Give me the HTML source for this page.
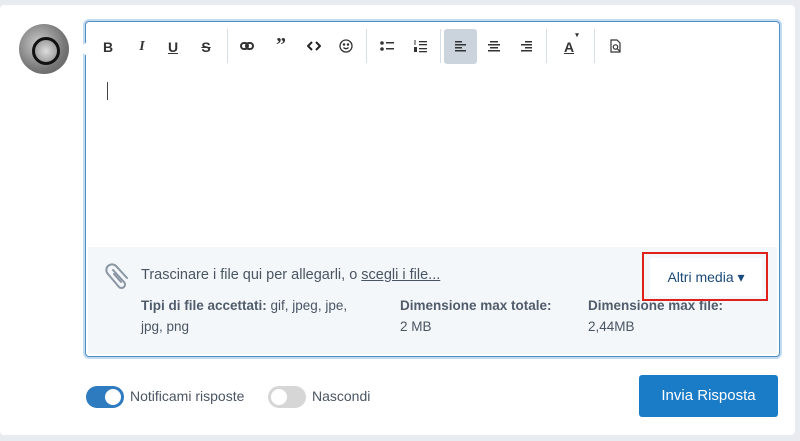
<!DOCTYPE html>
<html><head><style>
*{margin:0;padding:0;box-sizing:border-box}
body{width:800px;height:441px;background:#e8ecf0;font-family:"Liberation Sans",sans-serif;position:relative;overflow:hidden}
.card{position:absolute;left:0;top:5px;width:795px;height:430px;background:#fff;border-radius:4px}
.av{position:absolute;left:19px;top:24px;width:50px;height:50px;border-radius:50%;background:radial-gradient(circle at 40% 40%,#ccc,#777 60%,#555);}
.av:after{content:"";position:absolute;left:13px;top:13px;width:22px;height:22px;border-radius:50%;border:3px solid #111;background:radial-gradient(circle,#ddd,#888)}
.ed{position:absolute;left:85px;top:21px;width:695px;height:336px;border:1px solid #4f8fc8;box-shadow:0 0 0 2px #c4dbef;border-radius:4px;background:#fff}
.tip{position:absolute;left:77px;top:42px;width:10px;height:14px;background:#fff;clip-path:polygon(100% 0,0 50%,100% 100%)}
.ic{position:absolute;top:17px;font-size:14px;color:#333;font-weight:bold;transform:translateX(-50%)}
svg.s{position:absolute;top:17px;width:14px;height:14px}
.sep{position:absolute;top:7px;width:1px;height:34px;background:#d8dee5}
.cur{position:absolute;left:21px;top:60px;width:1px;height:18px;background:#444}
.att{position:absolute;left:2px;top:225px;width:689px;height:107px;background:#f4f7fa}
.t{position:absolute;font-size:14px;color:#4a5563}
.b{font-weight:bold;color:#505c6b}
.red{position:absolute;left:642px;top:252px;width:126px;height:49px;border:2px solid #e0201b}
.btnm{position:absolute;left:650px;top:258px;width:112px;height:38px;background:#fff;border-radius:3px;font-size:14px;color:#1c4a7a;text-align:center;line-height:38px}
.tg{position:absolute;top:386px;width:38px;height:22px;border-radius:11px}
.tg i{position:absolute;top:3px;width:16px;height:16px;border-radius:50%;background:#fff}
.send{position:absolute;left:639px;top:375px;width:139px;height:42px;background:#1a7bc7;border-radius:3px;color:#fff;font-size:15px;text-align:center;line-height:42px}
</style></head><body>
<div class="card"></div>
<div class="av"></div>
<div class="ed">
 <div class="ic" style="left:22px">B</div>
 <div class="ic" style="left:56px;font-style:italic;font-family:'Liberation Serif'">I</div>
 <div class="ic" style="left:87px;text-decoration:underline">U</div>
 <div class="ic" style="left:120px;text-decoration:line-through">S</div>
 <div class="sep" style="left:141px"></div>
 <svg class="s" style="left:154px" viewBox="0 0 14 14" fill="none" stroke="#333" stroke-width="2"><rect x="1" y="4" width="7" height="6" rx="3"/><rect x="6" y="4" width="7" height="6" rx="3"/></svg>
 <div class="ic" style="left:195px;font-size:20px;top:12px;font-family:'Liberation Serif'">”</div>
 <svg class="s" style="left:221px" viewBox="0 0 14 14" fill="none" stroke="#222" stroke-width="2"><path d="M5 3L1 7l4 4M9 3l4 4-4 4"/></svg>
 <svg class="s" style="left:253px" viewBox="0 0 14 14" fill="none" stroke="#333" stroke-width="1.3"><circle cx="7" cy="7" r="6"/><circle cx="5" cy="5.5" r=".6" fill="#333"/><circle cx="9" cy="5.5" r=".6" fill="#333"/><path d="M4.5 8.5q2.5 2.5 5 0"/></svg>
 <div class="sep" style="left:280px"></div>
 <svg class="s" style="left:294px" viewBox="0 0 14 14" fill="#333"><circle cx="2" cy="4" r="1.8"/><circle cx="2" cy="10" r="1.8"/><rect x="6" y="3" width="8" height="1.5"/><rect x="6" y="9" width="8" height="1.5"/></svg>
 <svg class="s" style="left:327px" viewBox="0 0 14 14" fill="#333"><rect x="1.5" y="1" width="1" height="5"/><rect x="1" y="8" width="3" height="5"/><rect x="6" y="2" width="8" height="1.3"/><rect x="6" y="5" width="8" height="1.3"/><rect x="6" y="9" width="8" height="1.3"/><rect x="6" y="12" width="8" height="1.3"/></svg>
 <div class="sep" style="left:354px"></div>
 <div style="position:absolute;left:358px;top:7px;width:33px;height:35px;background:#cbd3dc;border-radius:3px"></div>
 <svg class="s" style="left:368px" viewBox="0 0 14 14" fill="#333"><rect x="1" y="2" width="7" height="1.5"/><rect x="1" y="5" width="11" height="1.5"/><rect x="1" y="8" width="7" height="1.5"/><rect x="1" y="11" width="11" height="1.5"/></svg>
 <svg class="s" style="left:401px" viewBox="0 0 14 14" fill="#333"><rect x="3" y="2" width="8" height="1.5"/><rect x="1" y="5" width="12" height="1.5"/><rect x="3" y="8" width="8" height="1.5"/><rect x="1" y="11" width="12" height="1.5"/></svg>
 <svg class="s" style="left:433px" viewBox="0 0 14 14" fill="#333"><rect x="6" y="2" width="7" height="1.5"/><rect x="2" y="5" width="11" height="1.5"/><rect x="6" y="8" width="7" height="1.5"/><rect x="2" y="11" width="11" height="1.5"/></svg>
 <div class="sep" style="left:460px"></div>
 <div class="ic" style="left:483px;text-decoration:underline">A</div>
 <div class="ic" style="left:491px;top:9px;font-size:7px">▾</div>
 <div class="sep" style="left:508px"></div>
 <svg class="s" style="left:522px" viewBox="0 0 14 14" fill="none" stroke="#333" stroke-width="1.2"><path d="M3 1h6l3 3v9H3z"/><circle cx="7.5" cy="8" r="2.2"/><path d="M9 9.5l2.5 2.5"/></svg>
 <div class="cur"></div>
 <div class="att"></div>
</div>
<div class="tip"></div>
<svg style="position:absolute;left:104px;top:262px" width="28" height="28" viewBox="0 0 28 28" fill="none" stroke="#8a96a3" stroke-width="2" stroke-linecap="round"><path d="M9 8l11 12a3.5 3.5 0 0 1-5 5L4 12a5.5 5.5 0 0 1 8-8l11 12"/><path d="M13 12l7 8" transform="translate(-3,0)"/></svg>
<div class="t" style="left:141px;top:267px;font-size:14.5px">Trascinare i file qui per allegarli, o <u>scegli i file...</u></div>
<div class="t" style="left:141px;top:298px;font-size:13.5px"><span class="b">Tipi di file accettati:</span> gif, jpeg, jpe,</div>
<div class="t" style="left:141px;top:319px;font-size:13.5px">jpg, png</div>
<div class="t b" style="left:400px;top:298px;font-size:13.5px">Dimensione max totale:</div>
<div class="t" style="left:400px;top:319px;font-size:13.5px">2 MB</div>
<div class="t b" style="left:588px;top:298px;font-size:13.5px">Dimensione max file:</div>
<div class="t" style="left:588px;top:319px;font-size:13.5px">2,44MB</div>
<div class="btnm">Altri media ▾</div>
<div class="red"></div>
<div class="tg" style="left:86px;background:#2f7bbf"><i style="right:3px"></i></div>
<div class="t" style="left:130px;top:388px">Notificami risposte</div>
<div class="tg" style="left:268px;background:#d6d6d6"><i style="left:3px"></i></div>
<div class="t" style="left:312px;top:388px">Nascondi</div>
<div class="send">Invia Risposta</div>
</body></html>
